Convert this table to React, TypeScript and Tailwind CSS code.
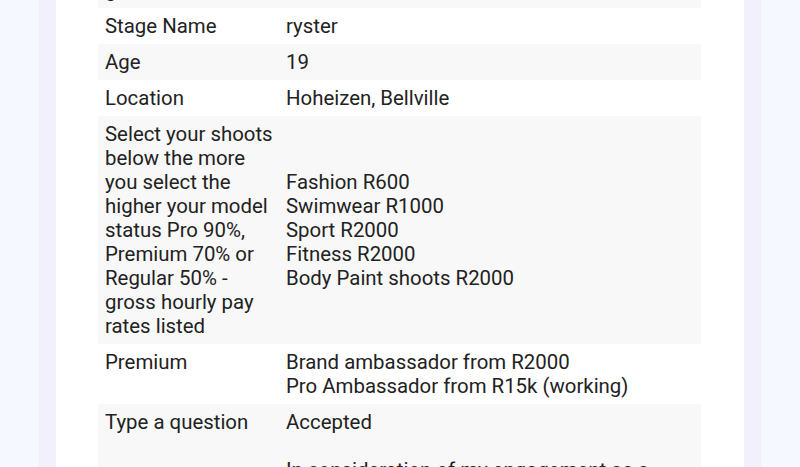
const rows: { label: string; value: React.ReactNode }[] = [
  { label: "Stage Name", value: "ryster" },
  { label: "Age", value: "19" },
  { label: "Location", value: "Hoheizen, Bellville" },
  {
    label:
      "Select your shoots below the more you select the higher your model status Pro 90%, Premium 70% or Regular 50% - gross hourly pay rates listed",
    value: (
      <>
        Fashion R600
        <br />
        Swimwear R1000
        <br />
        Sport R2000
        <br />
        Fitness R2000
        <br />
        Body Paint shoots R2000
      </>
    ),
  },
  {
    label: "Premium",
    value: (
      <>
        Brand ambassador from R2000
        <br />
        Pro Ambassador from R15k (working)
      </>
    ),
  },
  {
    label: "Type a question",
    value: (
      <>
        Accepted
        <br />
        <br />
        In consideration of my engagement as a model, I hereby grant the agency
        permission to use my images for promotional purposes.
      </>
    ),
  },
];

export default function App() {
  return (
    <div
      className="h-[467px] overflow-hidden bg-[#f5f8fe] px-[39px] text-[20.4px] leading-[24px] text-[#222]"
      style={{ fontFamily: "Roboto, 'Noto Sans', sans-serif" }}
    >
      <div className="h-full bg-[#f2f0fc] px-[17px]">
        <div className="h-full overflow-hidden bg-white pl-[42px] pr-[43px]">
          <table className="-mt-[28px] w-full table-fixed border-collapse">
            <tbody>
              <tr className="bg-[#f8f8f8]">
                <td className="w-[181px] py-[6px] pl-[7px] pr-[2px] align-top">
                  gender
                </td>
                <td className="px-[7px] py-[6px] align-middle">Female</td>
              </tr>
              {rows.map((row, i) => (
                <tr
                  key={row.label}
                  className={i % 2 === 0 ? "bg-white" : "bg-[#f8f8f8]"}
                >
                  <td className="w-[181px] py-[6px] pl-[7px] pr-[2px] align-top">
                    {row.label}
                  </td>
                  <td className="px-[7px] py-[6px] align-middle">
                    {row.value}
                  </td>
                </tr>
              ))}
            </tbody>
          </table>
        </div>
      </div>
    </div>
  );
}
